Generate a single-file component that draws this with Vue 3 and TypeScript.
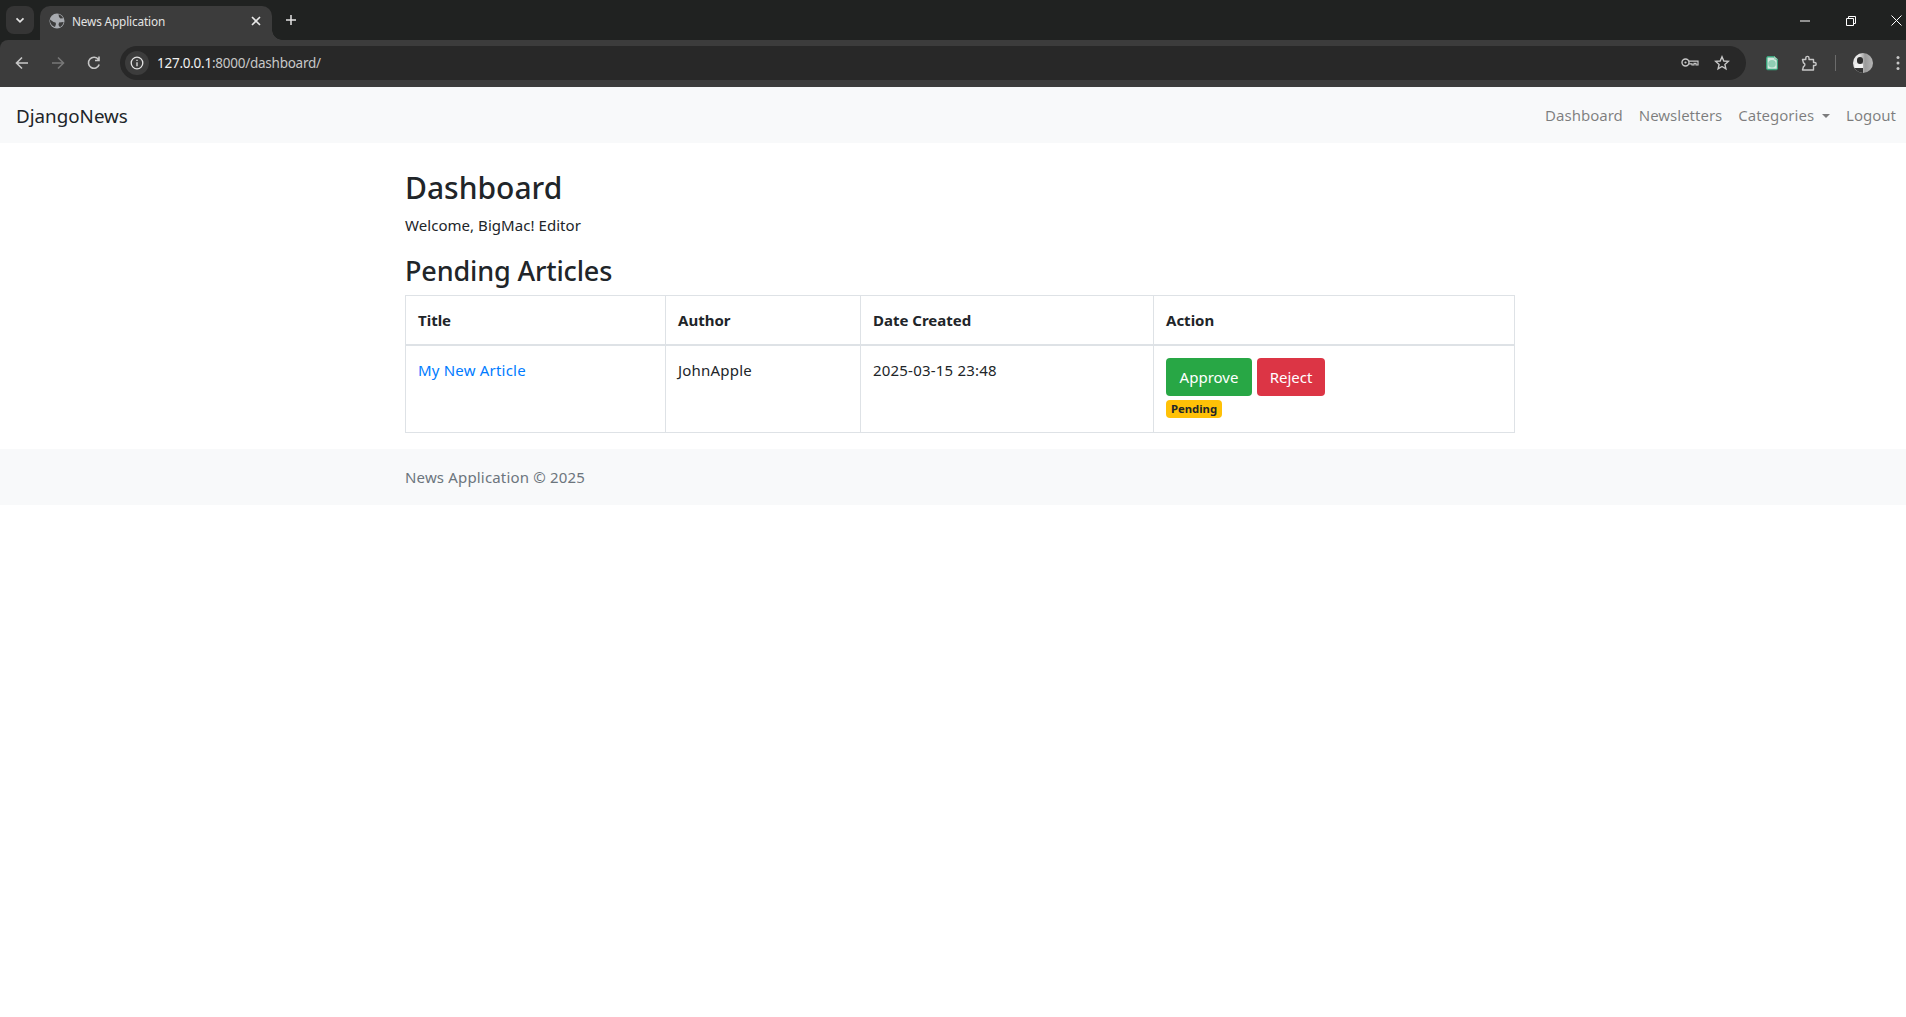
<script setup lang="ts">
import { ref } from "vue"

interface Article {
  title: string
  author: string
  created: string
  status: string
}

const navLinks = ref(["Dashboard", "Newsletters"])
const pending = ref<Article[]>([
  { title: "My New Article", author: "JohnApple", created: "2025-03-15 23:48", status: "Pending" },
])
</script>

<template>
  <div class="page">
    <!-- browser chrome -->
    <div class="chrome">
      <div class="tabstrip">
        <button class="tabsearch">
          <svg width="12" height="12" viewBox="0 0 12 12"><path d="M2.500 4.300 6 7.800l3.500-3.500" fill="none" stroke="#e3e3e3" stroke-width="1.700" /></svg>
        </button>
        <div class="tab">
          <svg class="globe" width="16" height="16" viewBox="0 0 16 16">
            <circle cx="8" cy="8" r="7.500" fill="#a8abb0" />
            <path d="M1 6.500 4.500 9l2 .5.500 1.500-1 3C3 13 1 10.500 1 8ZM9.500 1.200c2 .5 3.800 2 4.600 4l-2.600.3-1.500-1.500ZM10 9.500l4.600-.5c-.3 2.300-1.700 4.200-3.700 5.300L9.500 12Z" fill="#3c3c3c" />
          </svg>
          <span class="tab-title">News Application</span>
          <svg class="tab-x" width="10" height="10" viewBox="0 0 10 10"><path d="M1 1l8 8M9 1 1 9" stroke="#e8e8e8" stroke-width="1.600" /></svg>
        </div>
        <svg class="newtab" width="12" height="12" viewBox="0 0 12 12"><path d="M6 1v10M1 6h10" stroke="#e3e3e3" stroke-width="1.500" /></svg>
        <div class="winctl">
          <svg width="10" height="10" viewBox="0 0 10 10"><path d="M0 5h10" stroke="#fff" /></svg>
          <svg width="10" height="10" viewBox="0 0 10 10"><path d="M.5 2.500h7v7h-7zM2.500 2.500v-2h7v7h-2" fill="none" stroke="#fff" /></svg>
          <svg width="11" height="11" viewBox="0 0 11 11"><path d="M.5.500l10 10M10.500.500l-10 10" stroke="#fff" /></svg>
        </div>
      </div>
      <div class="toolbar">
        <svg class="tool" width="16" height="16" viewBox="0 0 16 16"><path d="M14 8H3M8 2.500 2.500 8 8 13.500" fill="none" stroke="#c7c7c7" stroke-width="1.600" /></svg>
        <svg class="tool" width="16" height="16" viewBox="0 0 16 16"><path d="M2 8h11M8 2.500 13.500 8 8 13.500" fill="none" stroke="#777" stroke-width="1.600" /></svg>
        <svg class="tool reload" width="16" height="16" viewBox="0 0 16 16"><path d="M13.200 9.500A5.500 5.500 0 1 1 12.500 4.600M13 1.500v4H9" fill="none" stroke="#c7c7c7" stroke-width="1.600" /></svg>
        <div class="omnibox">
          <span class="chip">
            <svg width="14" height="14" viewBox="0 0 14 14"><circle cx="7" cy="7" r="5.800" fill="none" stroke="#e3e3e3" stroke-width="1.300" /><path d="M7 6.200v4M7 3.700v1.400" stroke="#e3e3e3" stroke-width="1.300" /></svg>
          </span>
          <span class="url"><span class="host">127.0.0.1</span>:8000/dashboard/</span>
          <svg class="key" width="18" height="12" viewBox="0 0 18 12"><circle cx="4.500" cy="5.500" r="3.500" fill="none" stroke="#c7c7c7" stroke-width="1.400" /><circle cx="4.500" cy="5.500" r="1.100" fill="#c7c7c7" /><path d="M8 4.200h9v3.800h-2v-1.700h-2v1.700h-2V6.800H8" fill="none" stroke="#c7c7c7" stroke-width="1.200" /></svg>
          <svg class="star" width="16" height="16" viewBox="0 0 16 16"><path d="M8 1.800l1.800 4.200 4.500.4-3.400 3 1 4.500L8 11.500l-3.900 2.400 1-4.500-3.400-3 4.500-.4Z" fill="none" stroke="#c7c7c7" stroke-width="1.400" /></svg>
        </div>
        <svg class="ext-doc" width="14" height="16" viewBox="0 0 14 16"><path d="M1 2.500 2.500 1H9l4 3.500V14l-1.500 1.200h-9L1 14Z" fill="#3aa37c" /><path d="M2.500 2.500H8.500L11.800 5.500V13.800H2.500Z" fill="#d3e9df" /><circle cx="7" cy="8.700" r="3.800" fill="#8fcdb4" /><path d="M9 1v3.500h4" fill="#9ad0b8" /></svg>
        <svg class="ext-puzzle" width="16" height="16" viewBox="0 0 16 16"><path d="M1.500 4.500h3.300V3a1.600 1.600 0 0 1 3.200 0v1.500h4.500v3h1.200a1.500 1.500 0 0 1 0 3h-1.200V15H1.500l1-3.500a1.800 1.800 0 0 0 0-3.500Z" fill="none" stroke="#c7c7c7" stroke-width="1.400" stroke-linejoin="round" /></svg>
        <span class="divider"></span>
        <span class="avatar"><span class="avatar-head"></span><span class="avatar-fig"></span></span>
        <svg class="menu" width="4" height="16" viewBox="0 0 4 16"><circle cx="2" cy="2.500" r="1.500" fill="#c7c7c7" /><circle cx="2" cy="8" r="1.500" fill="#c7c7c7" /><circle cx="2" cy="13.500" r="1.500" fill="#c7c7c7" /></svg>
      </div>
    </div>

    <!-- site -->
    <nav class="navbar">
      <a class="brand">DjangoNews</a>
      <ul class="nav">
        <li v-for="link in navLinks" :key="link">{{ link }}</li>
        <li class="dropdown">Categories</li>
        <li>Logout</li>
      </ul>
    </nav>

    <main class="container">
      <h1>Dashboard</h1>
      <p class="welcome">Welcome, BigMac! Editor</p>
      <h2>Pending Articles</h2>
      <table class="articles">
        <colgroup>
          <col style="width: 260px" />
          <col style="width: 195px" />
          <col style="width: 293px" />
          <col />
        </colgroup>
        <thead>
          <tr>
            <th>Title</th>
            <th>Author</th>
            <th>Date Created</th>
            <th>Action</th>
          </tr>
        </thead>
        <tbody>
          <tr v-for="a in pending" :key="a.title">
            <td><a class="link">{{ a.title }}</a></td>
            <td>{{ a.author }}</td>
            <td>{{ a.created }}</td>
            <td>
              <div class="actions">
                <button class="btn approve">Approve</button>
                <button class="btn reject">Reject</button>
              </div>
              <div class="status"><span class="badge">{{ a.status }}</span></div>
            </td>
          </tr>
        </tbody>
      </table>
    </main>

    <footer class="footer">
      <div class="footer-inner">News Application © 2025</div>
    </footer>
  </div>
</template>

<style>
html,
body {
  margin: 0;
  overflow: hidden;
  background: #fff;
}
</style>

<style scoped>
/* the captured window is 1920 wide and cut off at 1906 */
.page {
  width: 1920px;
  font-family: "Noto Sans", "Open Sans", sans-serif;
  font-size: 15px;
  line-height: 24px;
  color: #212529;
}

.chrome {
  background: #202221;
}

.tabstrip {
  height: 40px;
  display: flex;
  align-items: flex-end;
  position: relative;
}

.tabsearch {
  width: 28px;
  height: 28px;
  margin: 0 6px 6px 6px;
  padding: 0;
  border: 0;
  border-radius: 8px;
  background: #353535;
  display: flex;
  align-items: center;
  justify-content: center;
}

.tab {
  width: 232px;
  height: 34px;
  background: #3c3c3c;
  border-radius: 10px 10px 0 0;
  display: flex;
  align-items: center;
  padding: 0 11px 4px 8px;
  box-sizing: border-box;
  position: relative;
}

.tab::after {
  content: "";
  position: absolute;
  right: -10px;
  bottom: 0;
  width: 10px;
  height: 10px;
  background: radial-gradient(circle at 100% 0, #202221 9.500px, #3c3c3c 10px);
}

.globe {
  flex: none;
  margin-left: 1px;
}

.tab-title {
  margin-left: 7px;
  flex: 1;
  color: #e3e3e3;
  font-size: 11.800px;
  letter-spacing: -0.15px;
  white-space: nowrap;
}

.newtab {
  margin: 14px 0 8px 13px;
  align-self: flex-start;
}

.winctl {
  position: absolute;
  left: 1800px;
  top: 15px;
  width: 102px;
  display: flex;
  justify-content: space-between;
  align-items: center;
}

.toolbar {
  height: 47px;
  background: #3c3c3c;
  border-radius: 8px 0 0 0;
  display: flex;
  align-items: center;
  padding: 0 0 1px 14px;
  box-sizing: border-box;
}

.tool {
  flex: none;
  margin-right: 20px;
}

.reload {
  margin-right: 18px;
}

.omnibox {
  width: 1626px;
  height: 34px;
  border-radius: 17px;
  background: #282828;
  display: flex;
  align-items: center;
  padding: 0 16px 0 5px;
  box-sizing: border-box;
  flex: none;
}

.chip {
  width: 24px;
  height: 24px;
  border-radius: 50%;
  background: #3c3c3c;
  display: flex;
  align-items: center;
  justify-content: center;
  flex: none;
}

.url {
  margin-left: 8px;
  flex: 1;
  font-size: 13.500px;
  letter-spacing: -0.25px;
  color: #c7c7c7;
}

.host {
  color: #f0f0f0;
}

.key {
  margin-right: 15px;
}

.ext-doc {
  margin-left: 19px;
  flex: none;
}

.ext-puzzle {
  margin-left: 22px;
  flex: none;
}

.divider {
  width: 1px;
  height: 16px;
  margin-left: 18px;
  background: #6b6b6b;
  flex: none;
}

.avatar {
  width: 20px;
  height: 20px;
  margin-left: 17px;
  border-radius: 50%;
  background: linear-gradient(90deg, #e8e8e8 0 30%, #9a9a9a 60%, #b5b5b5);
  position: relative;
  overflow: hidden;
  flex: none;
}

.avatar-head {
  position: absolute;
  left: 4px;
  top: 4px;
  width: 6px;
  height: 7px;
  border-radius: 3px;
  background: #2c2c2c;
}

.avatar-fig {
  position: absolute;
  left: 2px;
  top: 11px;
  width: 8px;
  height: 9px;
  background: linear-gradient(#f2f2f2 0 50%, #333 50%);
}

.menu {
  margin-left: 23px;
  flex: none;
}

.navbar {
  height: 56px;
  background: #f8f9fa;
  display: flex;
  align-items: center;
  justify-content: space-between;
  padding: 0 24px 0 16px;
  box-sizing: border-box;
}

.brand {
  font-size: 18.800px;
  color: #212529;
  padding-top: 1px;
}

.nav {
  list-style: none;
  margin: 0;
  padding: 0;
  display: flex;
  gap: 16px;
  color: rgba(0, 0, 0, 0.5);
}

.dropdown::after {
  content: "";
  display: inline-block;
  margin-left: 8px;
  vertical-align: 3px;
  border-top: 4.800px solid;
  border-left: 4.800px solid transparent;
  border-right: 4.800px solid transparent;
}

.container {
  width: 1110px;
  margin: 0 auto;
  padding-top: 26px;
}

h1 {
  margin: 0 0 6px;
  font-size: 30px;
  line-height: 38px;
  font-weight: 500;
}

.welcome {
  margin: 0 0 17px;
  letter-spacing: 0.05px;
}

h2 {
  margin: 0 0 7px;
  font-size: 27px;
  line-height: 34px;
  font-weight: 500;
  letter-spacing: -0.15px;
}

.articles {
  width: 100%;
  table-layout: fixed;
  border-collapse: collapse;
  margin-bottom: 16px;
}

.articles th,
.articles td {
  border: 1px solid #dee2e6;
  padding: 12px;
  text-align: left;
  vertical-align: top;
}

.articles th {
  font-weight: 700;
  border-bottom-width: 2px;
}

.articles td {
  letter-spacing: 0.2px;
}

.link {
  color: #007bff;
}

.actions {
  display: flex;
  gap: 5px;
}

.btn {
  height: 38px;
  padding: 0 12px;
  border: 0;
  border-radius: 4px;
  color: #fff;
  font: inherit;
  letter-spacing: 0;
}

.approve {
  width: 86px;
  background: #28a745;
}

.reject {
  width: 68px;
  background: #dc3545;
}

.status {
  height: 24px;
  padding-top: 1px;
  box-sizing: border-box;
  display: flex;
  align-items: center;
}

.badge {
  height: 18px;
  width: 56px;
  border-radius: 4px;
  background: #ffc107;
  font-size: 11.300px;
  font-weight: 700;
  line-height: 18px;
  text-align: center;
  letter-spacing: 0;
}

.footer {
  height: 56px;
  background: #f8f9fa;
  display: flex;
  align-items: center;
}

.footer-inner {
  width: 1110px;
  margin: 0 auto;
  color: #6c757d;
  letter-spacing: 0.17px;
}
</style>
